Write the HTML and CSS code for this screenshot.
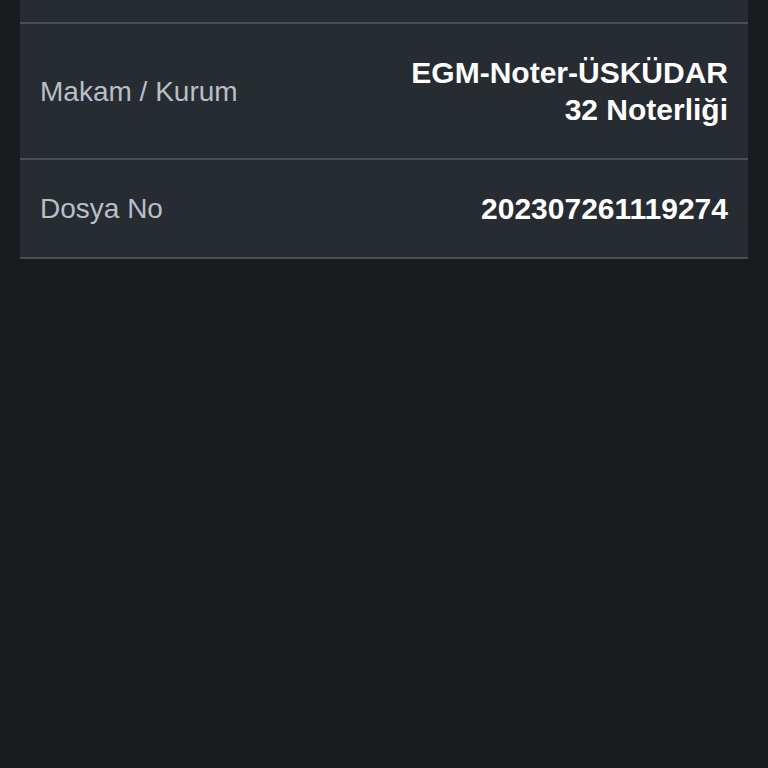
FILE: index.html
```html
<!DOCTYPE html>
<html lang="tr">
<head>
    <meta charset="UTF-8">
    <meta name="viewport" content="width=device-width, initial-scale=1.0">
    <title>Dosya Detayı</title>
    <link rel="stylesheet" href="styles.css">
</head>
<body>
    <div class="details">
        <div class="row row-cut"></div>
        <div class="row">
            <span class="label">Makam / Kurum</span>
            <span class="value">EGM-Noter-ÜSKÜDAR<br>32 Noterliği</span>
        </div>
        <div class="row">
            <span class="label">Dosya No</span>
            <span class="value">202307261119274</span>
        </div>
    </div>
</body>
</html>
```

FILE: styles.css
```css
body {
    margin: 0;
    padding: 0;
    background-color: #1a1b1f;
    font-family: "Liberation Sans", Arial, sans-serif;
}
.details {
    margin: 0 20px;
    background-color: #272b32;
}
.row {
    display: flex;
    justify-content: space-between;
    align-items: center;
    padding: 30px 20px;
    border-bottom: 2px solid #4a4e56;
    line-height: 37px;
}
.row-cut {
    height: 22px;
    padding: 0;
}
.label {
    font-size: 28px;
    color: #b7bfc8;
}
.value {
    font-size: 30px;
    font-weight: bold;
    color: #ffffff;
    text-align: right;
}
```
